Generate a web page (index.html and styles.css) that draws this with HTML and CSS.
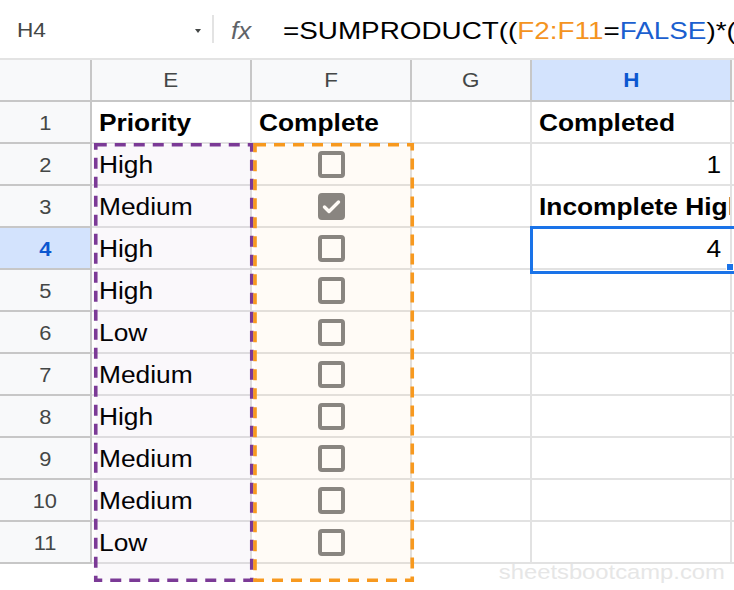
FILE: index.html
```html
<!DOCTYPE html>
<html>
<head>
<meta charset="utf-8">
<link rel="stylesheet" href="styles.css">
</head>
<body>
<div class="app">
  <div class="formula-bar">
    <div class="namebox"><span class="s">H4</span><span class="caret"></span></div>
    <div class="sep"></div>
    <div class="fx"><span class="s fx-t">fx</span></div>
    <div class="formula"><span class="s f-t">=SUMPRODUCT((<span class="ref">F2:F11</span>=<span class="bool">FALSE</span>)*(</span></div>
  </div>

  <div class="grid">
    <div class="c hd corner"></div>
    <div class="c hd"><span class="s s-c">E</span></div>
    <div class="c hd"><span class="s s-c">F</span></div>
    <div class="c hd"><span class="s s-c">G</span></div>
    <div class="c hd sel-h"><span class="s s-c">H</span></div>
    <div class="c hd"></div>

    <div class="c rh"><span class="s s-c">1</span></div>
    <div class="c b"><span class="s">Priority</span></div>
    <div class="c b"><span class="s">Complete</span></div>
    <div class="c"></div>
    <div class="c b"><span class="s">Completed</span></div>
    <div class="c"></div>

    <div class="c rh"><span class="s s-c">2</span></div>
    <div class="c"><span class="s">High</span></div>
    <div class="c cb"><span class="box"></span></div>
    <div class="c"></div>
    <div class="c r"><span class="s s-r">1</span></div>
    <div class="c"></div>

    <div class="c rh"><span class="s s-c">3</span></div>
    <div class="c"><span class="s">Medium</span></div>
    <div class="c cb"><span class="box on"><svg viewBox="0 0 19 19" width="19" height="19"><polyline points="2.5,10 7,14.5 16.5,5" fill="none" stroke="#fff" stroke-width="3.4" stroke-linecap="round" stroke-linejoin="round"/></svg></span></div>
    <div class="c"></div>
    <div class="c b"><span class="s">Incomplete High</span></div>
    <div class="c"></div>

    <div class="c rh sel-h"><span class="s s-c">4</span></div>
    <div class="c"><span class="s">High</span></div>
    <div class="c cb"><span class="box"></span></div>
    <div class="c"></div>
    <div class="c r active"><span class="s s-r">4</span></div>
    <div class="c"></div>

    <div class="c rh"><span class="s s-c">5</span></div>
    <div class="c"><span class="s">High</span></div>
    <div class="c cb"><span class="box"></span></div>
    <div class="c"></div>
    <div class="c"></div>
    <div class="c"></div>

    <div class="c rh"><span class="s s-c">6</span></div>
    <div class="c"><span class="s">Low</span></div>
    <div class="c cb"><span class="box"></span></div>
    <div class="c"></div>
    <div class="c"></div>
    <div class="c"></div>

    <div class="c rh"><span class="s s-c">7</span></div>
    <div class="c"><span class="s">Medium</span></div>
    <div class="c cb"><span class="box"></span></div>
    <div class="c"></div>
    <div class="c"></div>
    <div class="c"></div>

    <div class="c rh"><span class="s s-c">8</span></div>
    <div class="c"><span class="s">High</span></div>
    <div class="c cb"><span class="box"></span></div>
    <div class="c"></div>
    <div class="c"></div>
    <div class="c"></div>

    <div class="c rh"><span class="s s-c">9</span></div>
    <div class="c"><span class="s">Medium</span></div>
    <div class="c cb"><span class="box"></span></div>
    <div class="c"></div>
    <div class="c"></div>
    <div class="c"></div>

    <div class="c rh"><span class="s s-c">10</span></div>
    <div class="c"><span class="s">Medium</span></div>
    <div class="c cb"><span class="box"></span></div>
    <div class="c"></div>
    <div class="c"></div>
    <div class="c"></div>

    <div class="c rh"><span class="s s-c">11</span></div>
    <div class="c"><span class="s">Low</span></div>
    <div class="c cb"><span class="box"></span></div>
    <div class="c"></div>
    <div class="c"></div>
    <div class="c"></div>
  </div>

  <svg class="marks" width="734" height="590" viewBox="0 0 734 590">
    <rect x="95.75" y="144.75" width="156" height="435.5" fill="rgba(123,58,150,0.035)" stroke="#7b3a96" stroke-width="3.6" stroke-dasharray="11 8"/>
    <rect x="255" y="144.75" width="157.25" height="435.5" fill="rgba(247,153,31,0.04)" stroke="#f7991f" stroke-width="3.6" stroke-dasharray="11 8"/>
  </svg>

  <div class="watermark"><span class="s s-r">sheetsbootcamp.com</span></div>
</div>
</body>
</html>
```

FILE: styles.css
```css
* { box-sizing: border-box; }

body {
  margin: 0;
  background: #fff;
  font-family: "Liberation Sans", Arial, sans-serif;
}

.app {
  position: relative;
  width: 734px;
  height: 590px;
  overflow: hidden;
  background: #fff;
}

/* horizontally widened text, as in the reference */
.s {
  display: inline-block;
  transform: scaleX(1.12);
  transform-origin: left center;
  white-space: nowrap;
}
.s-c { transform-origin: center center; }
.s-r { transform-origin: right center; }

/* formula bar */
.formula-bar {
  display: flex;
  align-items: center;
  height: 60px;
  padding-top: 3px;
  border-bottom: 2px solid #e3e3e3;
  white-space: nowrap;
}

.namebox {
  width: 212px;
  display: flex;
  align-items: center;
  justify-content: space-between;
  padding: 0 11px 0 17px;
  font-size: 19.5px;
  color: #444746;
}
.namebox .s { transform: scaleX(1.16); }

.caret {
  width: 0;
  height: 0;
  border-left: 3.5px solid transparent;
  border-right: 3.5px solid transparent;
  border-top: 4.5px solid #444746;
}

.sep {
  width: 2px;
  height: 28px;
  margin-top: -4px;
  background: #e3e3e3;
}

.fx {
  width: 69px;
  padding-left: 17px;
  font-size: 24px;
  font-style: italic;
  color: #5f6368;
}
.fx .fx-t { transform: scaleX(1.08); }

.formula {
  font-size: 24px;
  color: #000;
}
.formula .f-t { transform: scaleX(1.16); }
.ref { color: #f4941f; }
.bool { color: #1b5fcf; }

/* grid */
.grid {
  display: grid;
  grid-template-columns: 92px 160px 160px 120px 200px 1fr;
  grid-auto-rows: 42px;
}

.c {
  display: flex;
  align-items: center;
  padding: 3px 7px 0;
  border-right: 2px solid #e2e2e2;
  border-bottom: 2px solid #e2e2e2;
  font-size: 23.5px;
  color: #000;
  overflow: hidden;
  white-space: nowrap;
}

.hd {
  background: #f8f9fa;
  border-color: #c7c7c7;
  justify-content: center;
  padding-top: 1px;
  font-size: 20px;
  color: #444746;
}

.rh {
  background: #f8f9fa;
  border-color: #c7c7c7;
  justify-content: center;
  padding-top: 2px;
  font-size: 19.5px;
  color: #444746;
}

.sel-h {
  background: #d3e3fd;
  color: #0b57d0;
  font-weight: bold;
}

.b { font-weight: bold; }

.r {
  justify-content: flex-end;
  padding-right: 9px;
}

.cb { justify-content: center; padding: 0; }

.box {
  display: block;
  width: 27px;
  height: 27px;
  border: 4px solid #858585;
  border-radius: 4px;
}
.box.on { background: #858585; }
.box svg { display: block; overflow: visible; }

.active {
  position: relative;
  overflow: visible;
}
.active::after {
  content: "";
  position: absolute;
  left: -2px;
  top: -2px;
  width: 201px;
  height: 42px;
  border: 3px solid #1a73e8;
}
.active::before {
  content: "";
  position: absolute;
  left: 194px;
  top: 35px;
  width: 6px;
  height: 6px;
  background: #1a73e8;
  border: 1px solid #fff;
  z-index: 2;
}

/* dashed range marks drawn over the sheet */
.marks {
  position: absolute;
  left: 0;
  top: 0;
  pointer-events: none;
}

.watermark {
  position: absolute;
  right: 9px;
  top: 560px;
  font-size: 20.5px;
  line-height: 24px;
  color: #e6e6e6;
}
.watermark .s { transform: scaleX(1.16); }
```
